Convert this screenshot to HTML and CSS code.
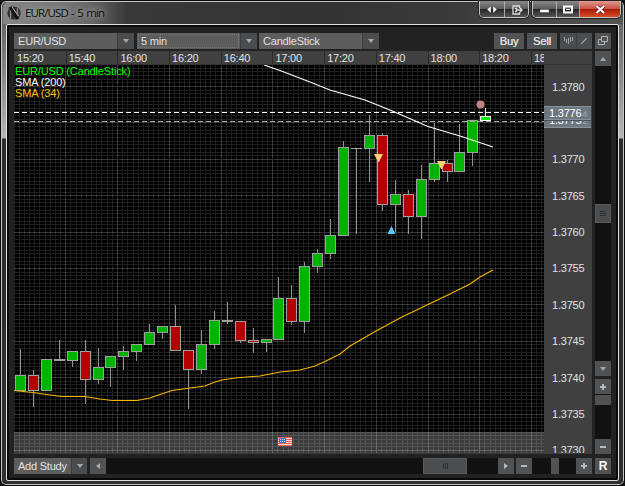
FILE: index.html
```html
<!DOCTYPE html>
<html lang="en">
<head>
<meta charset="utf-8">
<title>EUR/USD - 5 min</title>
<link rel="stylesheet" href="styles.css">
</head>
<body>
<div class="window">
  <header class="titlebar">
    <svg class="logo" width="14" height="14" viewBox="0 0 14 14"><circle cx="7" cy="7" r="6.6" fill="#303030"/><path d="M3.5 1.5v11M10.5 1.5v11" stroke="#888" stroke-width="1.4"/><path d="M3 1L11 13" stroke="#111" stroke-width="3"/><path d="M5 1l6.5 9" stroke="#bbb"/></svg>
    <h1>EUR/USD - 5 min</h1>
    <div class="controls">
      <div class="group">
        <button class="w25"><svg width="12" height="9" viewBox="0 0 12 9"><path d="M5 .8v7.4L1 4.5zM7 .8v7.4l4-3.7z" fill="#fff" stroke="#222" stroke-width=".4"/></svg></button>
        <button class="w23"><svg width="12" height="10" viewBox="0 0 12 10" fill="none" stroke="#ddd" stroke-width="1.3"><path d="M8.5 3V1H2v8h6.500V7M4 3.500h2M4 6.500h2M5 5h6M9 3l2 2-2 2"/></svg></button>
      </div>
      <div class="group">
        <button class="w24"><svg width="11" height="9" viewBox="0 0 11 9"><rect x="1" y="4.500" width="9" height="3" fill="#fff" stroke="#555" stroke-width=".5"/></svg></button>
        <button class="w23"><svg width="12" height="9" viewBox="0 0 12 9"><rect x="2" y="1.500" width="8" height="6" fill="none" stroke="#fff" stroke-width="2"/><path d="M4 4.500h4" stroke="#ddd"/></svg></button>
        <button class="close"><svg width="11" height="9" viewBox="0 0 11 9"><path d="M1.500 1L9 8M9 1L1.500 8" stroke="#611" stroke-width="3.500"/><path d="M1.500 1L9 8M9 1L1.500 8" stroke="#fff" stroke-width="2.300"/></svg></button>
      </div>
    </div>
  </header>
  <main class="client">
    <div class="toolbar">
      <div class="select"><span>EUR/USD</span><i class="drop"><b class="down"></b></i></div>
      <div class="select focus"><span>5 min</span><i class="drop"><b class="down"></b></i></div>
      <div class="select last"><span>CandleStick</span><i class="drop"><b class="down"></b></i></div>
      <button class="trade buy">Buy</button>
      <button class="trade sell">Sell</button>
      <div class="tools">
        <svg width="16" height="16" viewBox="0 0 16 16"><path d="M4.500 4v4M6.500 6v4M8.500 5v6M10.500 4v5M12.500 4v4" stroke="#a2a2a2"/></svg>
        <svg width="15" height="16" viewBox="0 0 15 16"><path d="M4.500 11L10.500 5" stroke="#aaa" stroke-width="1.200"/></svg>
      </div>
      <button class="popout"><svg width="12" height="12" viewBox="0 0 12 12" fill="none" stroke="#aeb4b8"><path d="M4.500 1.500h6v5h-6zM4 4.500H1.500v5h6V7"/></svg></button>
    </div>
    <div class="workspace">
      <div class="graph">
        <div class="times" id="times"></div>
        <div class="corner"></div>
        <div class="plot">
          <svg id="chart" width="530" height="388" viewBox="14 65 530 388"></svg>
          <ul class="legend"><li class="green">EUR/USD (CandleStick)</li><li>SMA (200)</li><li class="gold">SMA (34)</li></ul>
        </div>
        <div class="prices">
          <ol><li>1.3780</li><li></li><li>1.3770</li><li>1.3765</li><li>1.3760</li><li>1.3755</li><li>1.3750</li><li>1.3745</li><li>1.3740</li><li>1.3735</li><li>1.3730</li></ol>
          <div class="quote bid">1.3776<small>4</small></div>
          <div class="quote ask"><p>1.3775<small>2</small></p></div>
        </div>
      </div>
      <aside class="rail">
        <div class="vscroll"><button><b class="up"></b></button><div class="vthumb"><i></i></div><button><b class="down"></b></button></div>
        <div class="vzoom"><button><i class="plus"></i></button><div class="handle"></div><button class="end"><i class="minus"></i></button></div>
      </aside>
    </div>
    <footer class="bottom">
      <div class="study"><span>Add Study</span><i class="drop"><b class="down"></b></i></div>
      <div class="hscroll"><button><b class="left"></b></button><div class="hthumb"><i></i></div><button><b class="right"></b></button></div>
      <div class="hzoom"><button><i class="minus"></i></button><div class="handle"></div><button><i class="plus"></i></button></div>
      <button class="reset">R</button>
    </footer>
  </main>
</div>
<script src="chart.js"></script>
</body>
</html>
```
FILE: styles.css
```css
* { box-sizing: border-box; }
body { margin: 0; overflow: hidden; background: #111; font: 11px/14px "Liberation Sans", Arial, sans-serif; letter-spacing: -.22px; color: #e2e2e2; }
button { font: inherit; letter-spacing: inherit; color: inherit; margin: 0; padding: 0; border: 0; background: #515254; display: flex; align-items: center; justify-content: center; flex: none; }
.window { width: 625px; height: 486px; padding: 0 4px 4px 4px; border: 1px solid #090909; border-radius: 6px; background: linear-gradient(#555, #666 24px, #b5b5b5 137px, #2c2c2c 138px, #303030); box-shadow: inset 0 0 0 1px #c5c5c5; }
.titlebar { height: 22px; display: flex; padding: 0 0 0 2px; margin: 1px -3px 0 -2px; border-radius: 5px 5px 0 0; background: linear-gradient(90deg, #858585, #777 55px, #646464 90px, #383838 125px, #333 320px, #3a3a3a 450px, #545454 620px); }
.logo { margin: 4px 4px 0 2px; }
h1 { margin: 4px 0 0; font: 11.5px/14px "Open Sans", sans-serif; letter-spacing: -.9px; word-spacing: 1.2px; color: #080808; text-shadow: 0 0 5px #bbb, 0 0 8px #999; }
.controls { margin: -1px 2px 0 auto; display: flex; gap: 3px; }
.group { display: flex; height: 17px; border: 1px solid #c4c4c4; border-top: 0; border-radius: 0 0 5px 5px; overflow: hidden; box-shadow: 0 0 0 1px #222; }
.group button { background: linear-gradient(#888, #5c5c5c 48%, #252525 50%, #555); border-right: 1px solid #aaa; padding-top: 1px; }
.group button:last-child { border-right: 0; }
.w23 { width: 23px; } .w24 { width: 24px; } .w25 { width: 25px; }
.group .close { width: 40px; background: linear-gradient(#e09a90, #c95445 48%, #a91905 50%, #d84b25); }
.client { height: 457px; margin: 0 1px 0 1px; border: 1px solid #e0e0e0; border-radius: 2px; background: #222; box-shadow: inset 0 0 0 2px #090909; padding: 8px 7px 5px 7px; }
.toolbar { height: 18px; display: flex; padding-bottom: 2px; }
.select { width: 120px; display: flex; margin-right: 3px; height: 16px; background: #5d5d5d; line-height: 16px; letter-spacing: -.2px; }
.select.focus { margin-right: 2px; }
.select.last { margin: 0; }
.select span { flex: 1; padding-left: 4px; }
.focus span { outline: 1px dotted #777; outline-offset: -2px; }
.drop { width: 17px; display: flex; align-items: center; justify-content: center; background: #4b4c4e; border-left: 1px solid #3c3c3c; }
.down, .up, .left, .right { display: block; border: 3px solid transparent; }
.down { border-top: 4px solid #a4aab0; border-bottom: 0; }
.up { border-bottom: 4px solid #a4aab0; border-top: 0; }
.left { border-right: 4px solid #a4aab0; border-left: 0; }
.right { border-left: 4px solid #b4bac0; border-right: 0; }
.trade { height: 16px; letter-spacing: -.1px; text-shadow: .3px 0 #ddd; }
.buy { width: 30px; margin-left: auto; margin-right: 3px; }
.sell { width: 30px; margin-right: 3px; }
.tools { width: 32px; height: 16px; background: #4b4c4e; display: flex; margin-right: 3px; }
.tools svg + svg { border-left: 1px solid #3c3c3c; }
.popout { width: 16px; height: 16px; }
.workspace { display: flex; height: 403px; justify-content: space-between; }
.graph { width: 578px; display: grid; grid-template: 14px 389px / 530px 48px; border-right: 1px solid #4b4b4b; border-bottom: 1px solid #3c3c3c; }
.times { display: flex; overflow: hidden; background: #404040; border-bottom: 1px solid #333; white-space: nowrap; }
.times span { width: 51.700px; flex: none; padding-left: 2px; line-height: 15px; border-left: 1px solid #2a2a2a; }
.times span:first-child { border-color: #404040; }
.corner { background: #404040; border-bottom: 1px solid #333; }
.plot { position: relative; height: 388px; }
#chart { display: block; background: #000; }
.legend { position: absolute; left: 1px; top: 1px; margin: 0; padding: 0; list-style: none; line-height: 11px; letter-spacing: -.15px; color: #fff; }
.green { color: #00ff00; } .gold { color: #ffc000; }
.prices { position: relative; height: 388px; overflow: hidden; background: #404040; padding: 3.500px 0 0 8px; }
.prices ol { margin: 0; padding: 0; list-style: none; }
.prices li { height: 36.400px; line-height: 36.400px; }
.quote { position: absolute; left: 0; width: 47px; padding-left: 5px; line-height: 13px; background: #6d7780; border: 1px solid #87919a; border-width: 1px 0; color: #fff; overflow: hidden; }
.quote small { font-size: 9px; color: #9ca5ac; margin-left: 1px; }
.quote p { margin: -7px 0 0; }
.bid { top: 41px; height: 14px; } .ask { top: 55px; height: 8px; border-top-color: #4b5258; }
.rail { width: 16px; display: flex; flex-direction: column; gap: 3px; }
.vscroll { height: 325px; background: #111; display: flex; flex-direction: column; justify-content: space-between; }
.rail button { width: 16px; height: 15px; }
.vthumb { width: 16px; height: 19px; background: #4c4d4f; margin-bottom: -1px; border: 1px solid #58595a; display: flex; align-items: center; justify-content: center; position: relative; top: -1px; }
.vthumb i { width: 6px; height: 5px; border: solid #303030; border-width: 1px 0; background: linear-gradient(transparent 1px, #303030 1px 2px, transparent 2px); }
.vzoom { height: 75px; background: #111; display: flex; flex-direction: column; }
.vzoom .handle { height: 10px; margin-top: 1px; background: #515254; }
.vzoom .end { margin-top: auto; }
.plus, .minus { width: 6px; height: 6px; background: linear-gradient(#b5b9bc, #b5b9bc) center / 6px 2px no-repeat; }
.plus { background: linear-gradient(#b5b9bc, #b5b9bc) center / 6px 2px no-repeat, linear-gradient(#b5b9bc, #b5b9bc) center / 2px 6px no-repeat; }
.bottom { height: 16px; margin-top: 4px; display: flex; }
.study { width: 73px; height: 16px; background: #5d5d5d; display: flex; margin-right: 3px; line-height: 16px; }
.study span { flex: 1; padding-left: 4px; white-space: nowrap; }
.study .drop { width: 16px; }
.bottom button { height: 16px; width: 16px; }
.hscroll { width: 424px; background: #111; display: flex; margin-right: 2px; }
.hthumb { width: 44px; margin-left: 317px; margin-right: auto; background: #4c4d4f; border: 1px solid #5a5b5c; display: flex; align-items: center; justify-content: center; }
.hthumb i { width: 5px; height: 6px; border: solid #303030; border-width: 0 1px; background: linear-gradient(90deg, transparent 1px, #303030 1px 2px, transparent 2px); }
.hzoom { width: 76px; background: #111; display: flex; justify-content: space-between; margin-right: 3px; }
.hzoom .handle { width: 8px; background: #515254; margin-left: 2px; }
.bottom .reset { font-weight: 700; font-size: 12px; color: #fff; }
```
FILE: chart.js
```js
// Candles: [x centre, body top, body bottom, wick top, wick bottom, rising]
const candles = [
  [20, 375.5, 390.5, 349, 390, 1], [33, 375.5, 390.5, 370, 407, 0], [46, 359, 390.5, 359, 390, 1],
  [59, 359, 360.5, 340, 360, 0], [72, 351, 360.5, 351, 367, 1], [85, 351, 379.5, 340, 404, 0],
  [98, 367.5, 379.5, 348, 384, 1], [110, 356.5, 367.5, 356, 387, 1], [123, 351, 356.5, 346, 370, 1],
  [136, 344.5, 351.5, 344, 361, 1], [149, 332, 344.5, 324, 344, 1], [162, 326, 332.5, 326, 339, 1],
  [175, 326, 350.5, 305, 350, 0], [188, 350.5, 369.5, 350, 409, 0], [201, 344.5, 369.5, 330, 374, 1],
  [214, 320, 344.5, 311, 349, 1], [227, 320, 321.5, 302, 324, 0], [240, 321.5, 340.5, 321, 343, 0],
  [253, 340.5, 342, 328, 353, 0], [266, 339.5, 342, 339, 352, 1], [278, 298.5, 339.5, 277, 339, 1],
  [291, 298.5, 321, 285, 325, 0], [304, 266.5, 321, 262, 333, 1], [317, 253.5, 266.5, 249, 273, 1],
  [330, 235.5, 253.5, 219, 259, 1], [343, 147.5, 235.5, 141, 235, 1], [356, 148, 148.5, 148, 234, 1],
  [369, 135.5, 148, 115, 182, 1], [382, 135.5, 204.5, 133, 211, 0], [395, 194.5, 204.5, 180, 232, 1],
  [408, 194.5, 216.5, 190, 234, 0], [421, 179.5, 216.5, 165, 239, 1], [434, 163.5, 179.5, 123, 182, 1],
  [447, 163.5, 171, 160, 182, 0], [459, 152.5, 171, 124, 171, 1], [472, 120.5, 152.5, 120, 166, 1]
];

const out = [];
const line = (x1, y1, x2, y2, color, extra = '') =>
  out.push(`<line x1="${x1}" y1="${y1}" x2="${x2}" y2="${y2}" stroke="${color}" ${extra}/>`);
const rect = (x, y, w, h, fill, extra = '') =>
  out.push(`<rect x="${x}" y="${y}" width="${w}" height="${h}" fill="${fill}" ${extra}/>`);

// Grid: ten minor divisions for each major one
rect(14, 432, 530, 21, '#3b3b3b');
const major = [];
out.push('<g opacity=".12">');
for (let i = 0; i < 103; i++) {
  const x = Math.floor(14 + i * 5.175) + 0.5;
  if (i % 10 === 0 && i) major.push([x, 65, x, 453]);
  else line(x, 65, x, 453, '#fff');
}
for (let i = -5; i < 101; i++) {
  const y = Math.floor(86.5 + i * 3.64) + 0.5;
  if (i % 10 === 0) major.push([14, y, 544, y]);
  else line(14, y, 544, y, '#fff');
}
out.push('</g><g opacity=".2">');
major.forEach(m => line(...m, '#fff'));
out.push('</g>');

// Moving averages sit over the candles
candles.forEach(([x, top, bottom, high, low, up]) => {
  line(x + 0.5, high, x + 0.5, low, '#929292');
  const y = Math.floor(top) + 0.5;
  const h = Math.max(0, Math.floor(bottom) + 0.5 - y);
  if (h < 1) line(x - 5, y, x + 6, y, '#aaa');
  else rect(x - 4.5, y, 10, h, up ? '#00b300' : '#b30000', 'stroke="#a0a0a0"');
});
line(485.5, 108, 485.5, 117, '#eee');
rect(480.5, 116.5, 10, 4, '#00f000', 'stroke="#fff"');
line(14, 112.5, 544, 112.5, '#fff', 'stroke-dasharray="5 3"');
line(14, 121.5, 544, 121.5, '#aaa', 'stroke-dasharray="5 3"');
const curve = (points, color) =>
  out.push(`<polyline points="${points}" fill="none" stroke="${color}" stroke-width="1.1"/>`);
curve('264,65 280,70.5 310,82 330,90 365,100 390,110 428,126.5 460,136 493,147', '#fff');
curve('14,390.500 33,392.500 50,395 62,396.500 85,396.500 100,399 112,400.500 137,400.500 150,398 160,394.500 172,390.500 190,388 205,386 215,382 222,380 235,378 260,376 280,372 300,370 315,366 325,361.500 340,354 350,346 376,331 400,318 427,305 450,294 470,284 480,277 493,270', '#f5b800');

// Trade markers and the news flag
out.push('<path d="M374 154h9l-4 8h-1zM437 161h9l-4 8h-1z" fill="#ffd078"/>');
out.push('<path d="M391.500 226l4 8h-8z" fill="#5cc8ff"/>');
out.push('<circle cx="480.500" cy="104.500" r="4" fill="#c08484"/>');
rect(278, 437, 14, 9, '#ffd9d4');
for (let y = 437; y < 446; y += 2) rect(278, y, 14, 1, '#f45a50');
rect(279, 438, 7, 5, '#3f6fe0');
out.push('<path d="M280 439.500h6M280 441.500h6" stroke="#fff" stroke-width=".7" stroke-dasharray="1 1"/>');
document.getElementById('chart').innerHTML = out.join('');

const hours = ['15:20', '15:40', '16:00', '16:20', '16:40', '17:00', '17:20', '17:40', '18:00', '18:20', '18:40'];
document.getElementById('times').innerHTML = hours.map(t => `<span>${t}</span>`).join('');
```
